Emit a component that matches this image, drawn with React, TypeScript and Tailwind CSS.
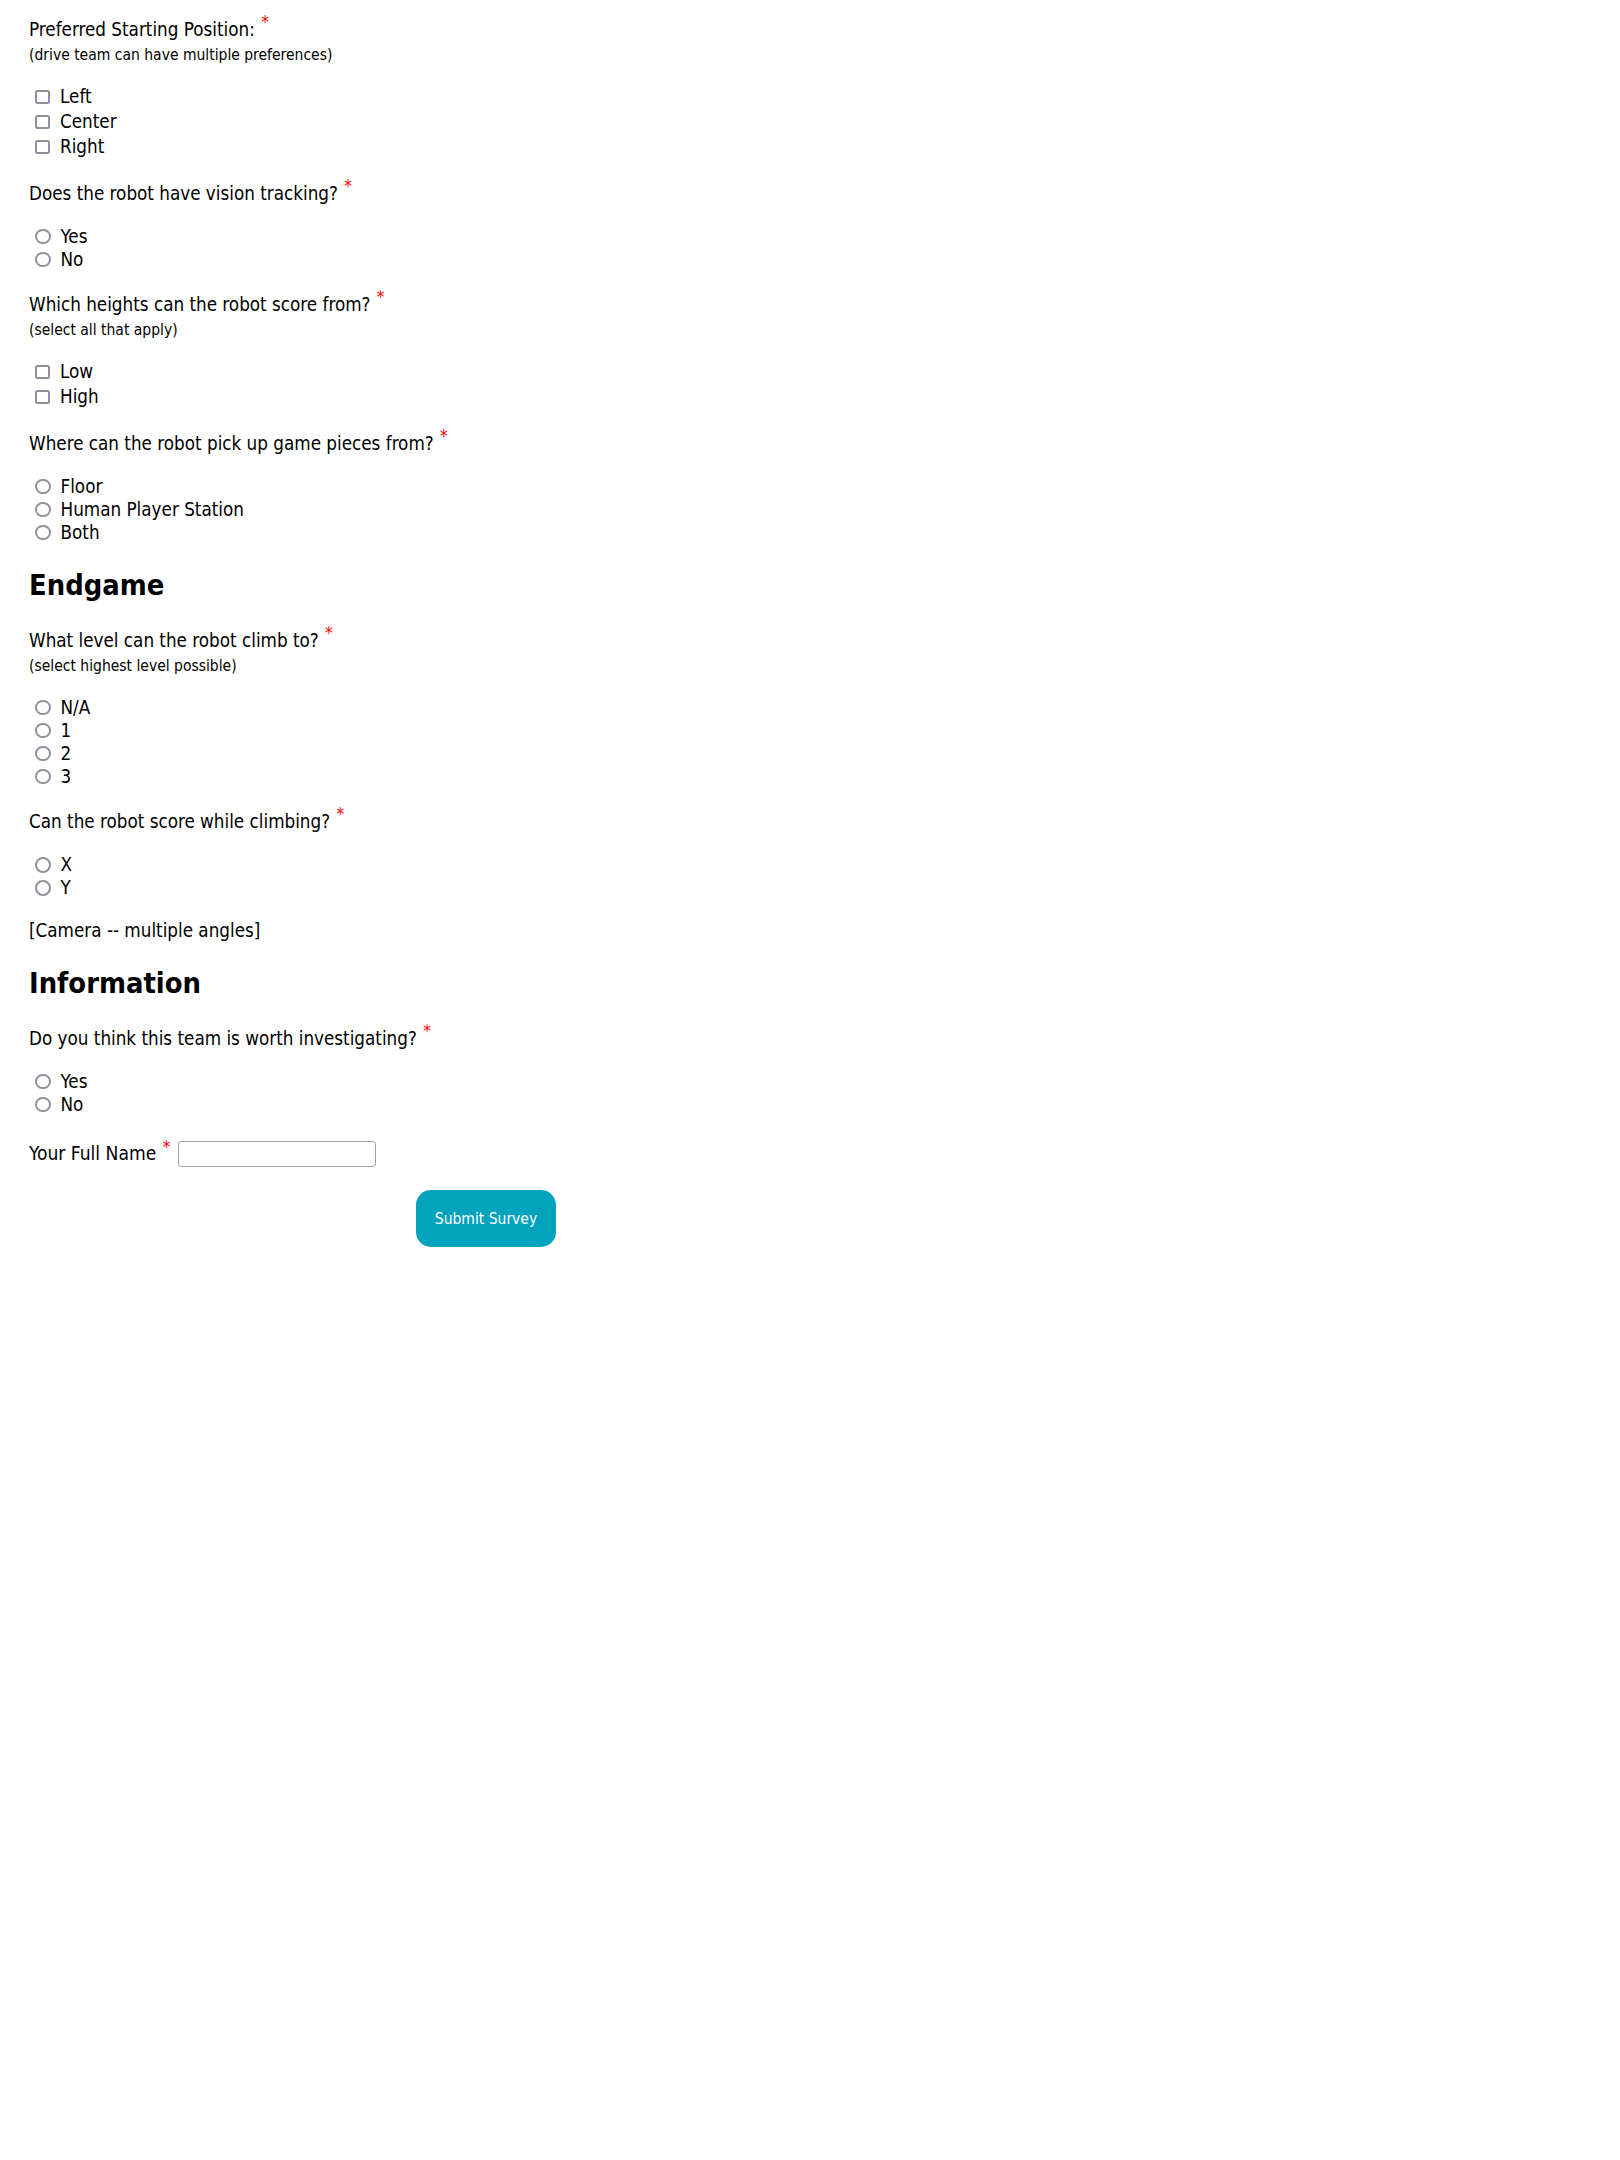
import React from "react";

const FONT = "font-['DejaVu_Sans_Condensed','DejaVu_Sans',sans-serif]";

function Req() {
  return <span className="ml-[1px] text-[#ff0000] text-[17px] leading-[0] align-super">*</span>;
}

function Question({ text, sub, className = "" }: { text: string; sub?: string; className?: string }) {
  return (
    <div className={className}>
      <div className="text-[18.7px] leading-[24px] h-[24px] text-black">
        {text} <Req />
      </div>
      {sub && <div className="mt-[1px] text-[15.5px] leading-[24px] h-[24px] text-black">{sub}</div>}
    </div>
  );
}

function CheckRow({ label }: { label: string }) {
  return (
    <div role="checkbox" aria-checked="false" className="flex items-center h-[25px] text-[18.7px] leading-[25px] text-black">
      <span className="block ml-[6px] mr-[10.5px] mt-[2px] w-[14.5px] h-[14.5px] border-2 border-[#8f8f9d] rounded-[2.5px] bg-white shrink-0" />
      <span>{label}</span>
    </div>
  );
}

function RadioRow({ label }: { label: string }) {
  return (
    <div role="radio" aria-checked="false" className="flex items-center h-[23px] text-[18.7px] leading-[23px] text-black">
      <span className="block ml-[6px] mr-[10px] mt-[1px] w-[15.5px] h-[15.5px] border-2 border-[#8f8f9d] rounded-full bg-white shrink-0" />
      <span>{label}</span>
    </div>
  );
}

function Heading({ text, className = "" }: { text: string; className?: string }) {
  return <h2 className={`text-[28.8px] leading-[34px] h-[34px] font-bold text-black ${className}`}>{text}</h2>;
}

export default function App() {
  return (
    <div className={`${FONT} bg-white min-h-screen w-full pl-[29px] pt-[17.5px] text-black`}>
      <Question text="Preferred Starting Position:" sub="(drive team can have multiple preferences)" />
      <div className="mt-[17px]">
        <CheckRow label="Left" />
        <CheckRow label="Center" />
        <CheckRow label="Right" />
      </div>

      <Question className="mt-[23px]" text="Does the robot have vision tracking?" />
      <div className="mt-[19px]">
        <RadioRow label="Yes" />
        <RadioRow label="No" />
      </div>

      <Question className="mt-[22px]" text="Which heights can the robot score from?" sub="(select all that apply)" />
      <div className="mt-[17px]">
        <CheckRow label="Low" />
        <CheckRow label="High" />
      </div>

      <Question className="mt-[23px]" text="Where can the robot pick up game pieces from?" />
      <div className="mt-[19px]">
        <RadioRow label="Floor" />
        <RadioRow label="Human Player Station" />
        <RadioRow label="Both" />
      </div>

      <Heading className="mt-[24.5px]" text="Endgame" />

      <Question className="mt-[26.5px]" text="What level can the robot climb to?" sub="(select highest level possible)" />
      <div className="mt-[18px]">
        <RadioRow label="N/A" />
        <RadioRow label="1" />
        <RadioRow label="2" />
        <RadioRow label="3" />
      </div>

      <Question className="mt-[22px]" text="Can the robot score while climbing?" />
      <div className="mt-[19.5px]">
        <RadioRow label="X" />
        <RadioRow label="Y" />
      </div>

      <div className="mt-[19.5px] text-[18.7px] leading-[24px] h-[24px]">[Camera -- multiple angles]</div>

      <Heading className="mt-[23.5px]" text="Information" />

      <Question className="mt-[26.5px]" text="Do you think this team is worth investigating?" />
      <div className="mt-[19px]">
        <RadioRow label="Yes" />
        <RadioRow label="No" />
      </div>

      <div className="mt-[25.5px] flex items-center h-[26px]">
        <span className="text-[19.1px] leading-[24px]">
          Your Full Name <Req />
        </span>
        <input
          type="text"
          className="ml-[8px] w-[198px] h-[26px] border border-[#a0a0ab] rounded-[3px] bg-white outline-none px-1 text-[16px]"
        />
      </div>

      <div className="mt-[23px] w-[914px] flex justify-center">
        <button
          type="submit"
          className="w-[140px] h-[57px] pt-[3px] rounded-[15px] bg-[#02a3bd] text-white text-[15.5px] leading-none"
        >
          Submit Survey
        </button>
      </div>
    </div>
  );
}
